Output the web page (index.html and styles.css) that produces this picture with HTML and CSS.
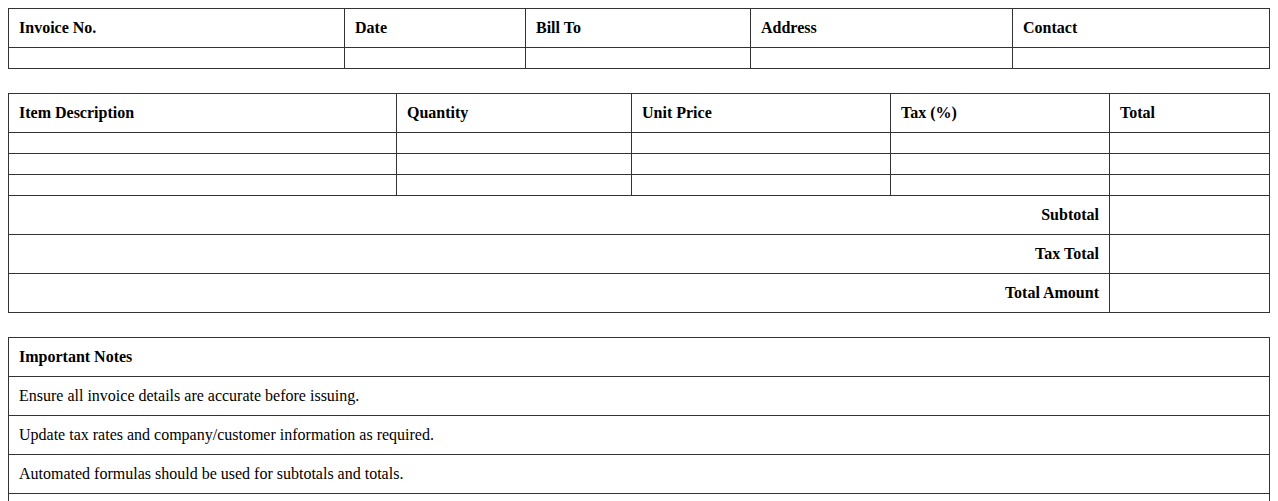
FILE: index.html
```html
<!DOCTYPE html>
<html>
<head>
<meta charset="utf-8">
<link rel="stylesheet" href="styles.css">
</head>
<body>
<table class="grid">
  <colgroup>
    <col class="c1a"><col class="c1b"><col class="c1c"><col class="c1d"><col>
  </colgroup>
  <tr><th>Invoice No.</th><th>Date</th><th>Bill To</th><th>Address</th><th>Contact</th></tr>
  <tr><td></td><td></td><td></td><td></td><td></td></tr>
</table>

<table class="grid">
  <colgroup>
    <col class="c2a"><col class="c2b"><col class="c2c"><col class="c2d"><col>
  </colgroup>
  <tr><th>Item Description</th><th>Quantity</th><th>Unit Price</th><th>Tax (%)</th><th>Total</th></tr>
  <tr><td></td><td></td><td></td><td></td><td></td></tr>
  <tr><td></td><td></td><td></td><td></td><td></td></tr>
  <tr><td></td><td></td><td></td><td></td><td></td></tr>
  <tr><th colspan="4" class="right">Subtotal</th><td></td></tr>
  <tr><th colspan="4" class="right">Tax Total</th><td></td></tr>
  <tr><th colspan="4" class="right">Total Amount</th><td></td></tr>
</table>

<table class="grid">
  <tr><th>Important Notes</th></tr>
  <tr><td>Ensure all invoice details are accurate before issuing.</td></tr>
  <tr><td>Update tax rates and company/customer information as required.</td></tr>
  <tr><td>Automated formulas should be used for subtotals and totals.</td></tr>
  <tr><td>Keep a copy of each invoice for your records.</td></tr>
</table>
</body>
</html>
```
FILE: styles.css
```css
body {
  margin: 8px;
  font-family: "Liberation Serif", "Times New Roman", serif;
  font-size: 16px;
  color: #000;
  background: #fff;
}
.grid {
  width: 100%;
  border-collapse: collapse;
  table-layout: fixed;
  margin-bottom: 24px;
}
.grid th, .grid td {
  border: 1px solid #333;
  padding: 10px;
  text-align: left;
  line-height: 18px;
}
.grid th { font-weight: bold; }
.grid th.right { text-align: right; }
.c1a { width: 336px; }
.c1b { width: 181px; }
.c1c { width: 225px; }
.c1d { width: 262px; }
.c2a { width: 388px; }
.c2b { width: 235px; }
.c2c { width: 259px; }
.c2d { width: 219px; }
```
